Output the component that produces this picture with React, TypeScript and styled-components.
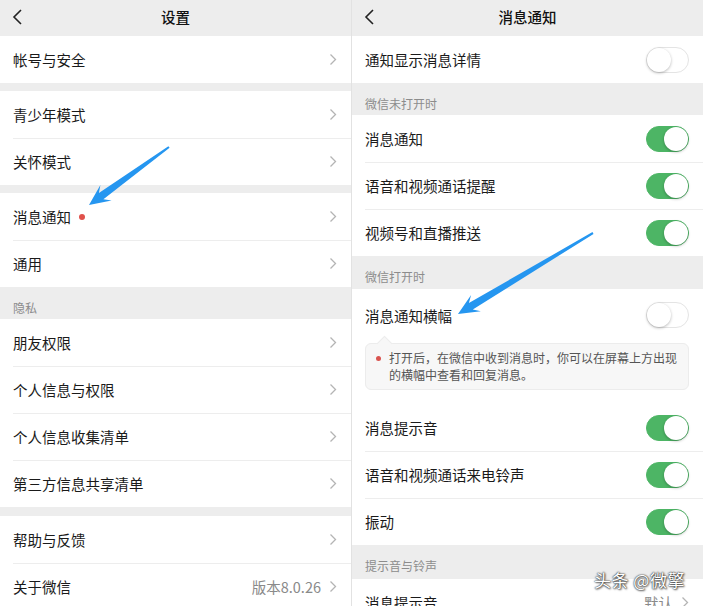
import styled, { createGlobalStyle } from "styled-components";

const GlobalStyle = createGlobalStyle`
  html, body {
    margin: 0;
    padding: 0;
    background: #ededed;
  }
  body {
    font-family: "Noto Sans CJK SC", "Noto Sans", sans-serif;
    color: #1a1a1a;
  }
`;

const Page = styled.div`
  position: relative;
  display: flex;
  gap: 1px;
  width: 703px;
  height: 606px;
  overflow: hidden;
  background: #e2e2e2;
`;

const Panel = styled.div`
  flex: none;
  width: 351px;
  display: flex;
  flex-direction: column;
  background: #ededed;
`;

const NavBar = styled.div`
  position: relative;
  flex: none;
  height: 36px;
  padding-bottom: 3px;
  box-sizing: border-box;
  display: flex;
  align-items: center;
  justify-content: center;
`;

const Back = styled.svg`
  position: absolute;
  left: 12px;
  top: 8px;
`;

const Title = styled.div`
  font-size: 14.5px;
  font-weight: 500;
  color: #111;
`;

const Group = styled.div<{ $gap?: number }>`
  flex: none;
  background: #fff;
  margin-top: ${(p) => p.$gap ?? 0}px;
`;

const Row = styled.div<{ $h?: number }>`
  position: relative;
  height: ${(p) => p.$h ?? 47}px;
  display: flex;
  align-items: center;
  padding: 0 14px 0 13px;
  box-sizing: border-box;

  & + &::before {
    content: "";
    position: absolute;
    left: 13px;
    right: 0;
    top: 0;
    height: 1px;
    background: #ededed;
  }
`;

const Label = styled.span`
  flex: 1;
  font-size: 14.5px;
  display: flex;
  align-items: center;
`;

const Dot = styled.span`
  display: inline-block;
  width: 6px;
  height: 6px;
  border-radius: 50%;
  background: #e0514b;
  margin-left: 8px;
`;

const Value = styled.span`
  font-size: 14.5px;
  color: #8a8a8a;
  margin-right: 8px;
`;

const Section = styled.div<{ $h?: number }>`
  flex: none;
  height: ${(p) => p.$h ?? 34}px;
  padding: 13px 13px 0;
  box-sizing: border-box;
  font-size: 12px;
  line-height: 16px;
  color: #8c8c8c;
`;

const Toggle = styled.span<{ $on?: boolean }>`
  position: relative;
  flex: none;
  width: 43px;
  height: 26px;
  border-radius: 13px;
  box-sizing: border-box;
  background: ${(p) => (p.$on ? "#4db565" : "#fff")};
  border: 1px solid ${(p) => (p.$on ? "#4db565" : "#e4e4e4")};

  &::after {
    content: "";
    position: absolute;
    top: 0;
    left: ${(p) => (p.$on ? "17px" : "0")};
    width: 24px;
    height: 24px;
    border-radius: 50%;
    background: #fff;
    box-shadow: 0 1px 3px rgba(0, 0, 0, 0.28);
  }
`;

const BannerBlock = styled.div`
  position: relative;
  padding-bottom: 14px;
`;

const Tip = styled.div`
  position: relative;
  margin: 2px 14px 0 13px;
  padding: 5px 10px 6px 23px;
  background: #f7f7f7;
  border: 1px solid #ececec;
  border-radius: 6px;
  font-size: 12px;
  line-height: 17px;
  color: #555;

  &::before {
    content: "";
    position: absolute;
    left: 13px;
    top: -6px;
    width: 10px;
    height: 10px;
    background: #f7f7f7;
    border-left: 1px solid #ececec;
    border-top: 1px solid #ececec;
    transform: rotate(45deg);
  }
`;

const TipDot = styled.span`
  position: absolute;
  left: 10px;
  top: 12px;
  width: 5px;
  height: 5px;
  border-radius: 50%;
  background: #d9534f;
`;

const Overlay = styled.svg`
  position: absolute;
  left: 0;
  top: 0;
  pointer-events: none;
`;

const Watermark = styled.div`
  position: absolute;
  left: 594px;
  top: 567px;
  font-size: 17px;
  color: #fff;
  letter-spacing: 0.5px;
  text-shadow: 0 0 1px #333, 0 0 2px #333, 1px 1px 2px rgba(0, 0, 0, 0.6);
`;

const Chevron = () => (
  <svg width="8" height="13" viewBox="0 0 8 13">
    <path d="M1.5 1.5 L6.5 6.5 L1.5 11.5" fill="none" stroke="#b4b4b4" strokeWidth="1.3" />
  </svg>
);

const BackIcon = () => (
  <Back width="12" height="18" viewBox="0 0 12 18">
    <path d="M9 2 L2 9 L9 16" fill="none" stroke="#222" strokeWidth="1.6" />
  </Back>
);

const arrowPoints = (x1: number, y1: number, x2: number, y2: number) => {
  const dx = x2 - x1;
  const dy = y2 - y1;
  const len = Math.hypot(dx, dy);
  const ux = dx / len;
  const uy = dy / len;
  const nx = -uy;
  const ny = ux;
  const at = (back: number, side: number) =>
    `${(x2 - ux * back + nx * side).toFixed(1)},${(y2 - uy * back + ny * side).toFixed(1)}`;
  return [
    at(len, 1),
    at(15, 3.8),
    at(21, 9.5),
    at(0, 0),
    at(21, -9.5),
    at(15, -3.8),
    at(len, -1),
  ].join(" ");
};

type Item = { label: string; dot?: boolean; value?: string };

const NavRows = ({ items, gap }: { items: Item[]; gap?: number }) => (
  <Group $gap={gap}>
    {items.map((it) => (
      <Row key={it.label}>
        <Label>
          {it.label}
          {it.dot && <Dot />}
        </Label>
        {it.value && <Value>{it.value}</Value>}
        <Chevron />
      </Row>
    ))}
  </Group>
);

type SwitchItem = { label: string; on: boolean };

const SwitchRows = ({ items }: { items: SwitchItem[] }) => (
  <>
    {items.map((it) => (
      <Row key={it.label}>
        <Label>{it.label}</Label>
        <Toggle $on={it.on} />
      </Row>
    ))}
  </>
);

const App = () => (
  <>
    <GlobalStyle />
    <Page>
      <Panel>
        <NavBar>
          <BackIcon />
          <Title>设置</Title>
        </NavBar>
        <NavRows items={[{ label: "帐号与安全" }]} />
        <NavRows gap={8} items={[{ label: "青少年模式" }, { label: "关怀模式" }]} />
        <NavRows gap={8} items={[{ label: "消息通知", dot: true }, { label: "通用" }]} />
        <Section $h={32}>隐私</Section>
        <NavRows
          items={[
            { label: "朋友权限" },
            { label: "个人信息与权限" },
            { label: "个人信息收集清单" },
            { label: "第三方信息共享清单" },
          ]}
        />
        <NavRows gap={9} items={[{ label: "帮助与反馈" }, { label: "关于微信", value: "版本8.0.26" }]} />
      </Panel>

      <Panel>
        <NavBar>
          <BackIcon />
          <Title>消息通知</Title>
        </NavBar>
        <Group>
          <SwitchRows items={[{ label: "通知显示消息详情", on: false }]} />
        </Group>
        <Section $h={32}>微信未打开时</Section>
        <Group>
          <SwitchRows
            items={[
              { label: "消息通知", on: true },
              { label: "语音和视频通话提醒", on: true },
              { label: "视频号和直播推送", on: true },
            ]}
          />
        </Group>
        <Section $h={33}>微信打开时</Section>
        <Group>
          <BannerBlock>
            <Row $h={52}>
              <Label>消息通知横幅</Label>
              <Toggle />
            </Row>
            <Tip>
              <TipDot />
              打开后，在微信中收到消息时，你可以在屏幕上方出现的横幅中查看和回复消息。
            </Tip>
          </BannerBlock>
          <Row>
            <Label>消息提示音</Label>
            <Toggle $on />
          </Row>
          <SwitchRows
            items={[
              { label: "语音和视频通话来电铃声", on: true },
              { label: "振动", on: true },
            ]}
          />
        </Group>
        <Section>提示音与铃声</Section>
        <Group>
          <Row>
            <Label>消息提示音</Label>
            <Value>默认</Value>
            <Chevron />
          </Row>
        </Group>
      </Panel>

      <Overlay width="703" height="606" viewBox="0 0 703 606">
        <polygon points={arrowPoints(169, 147, 89, 205)} fill="#2596f0" />
        <polygon points={arrowPoints(593, 233, 458, 314)} fill="#2596f0" />
      </Overlay>
      <Watermark>头条 @微擎</Watermark>
    </Page>
  </>
);

export default App;
